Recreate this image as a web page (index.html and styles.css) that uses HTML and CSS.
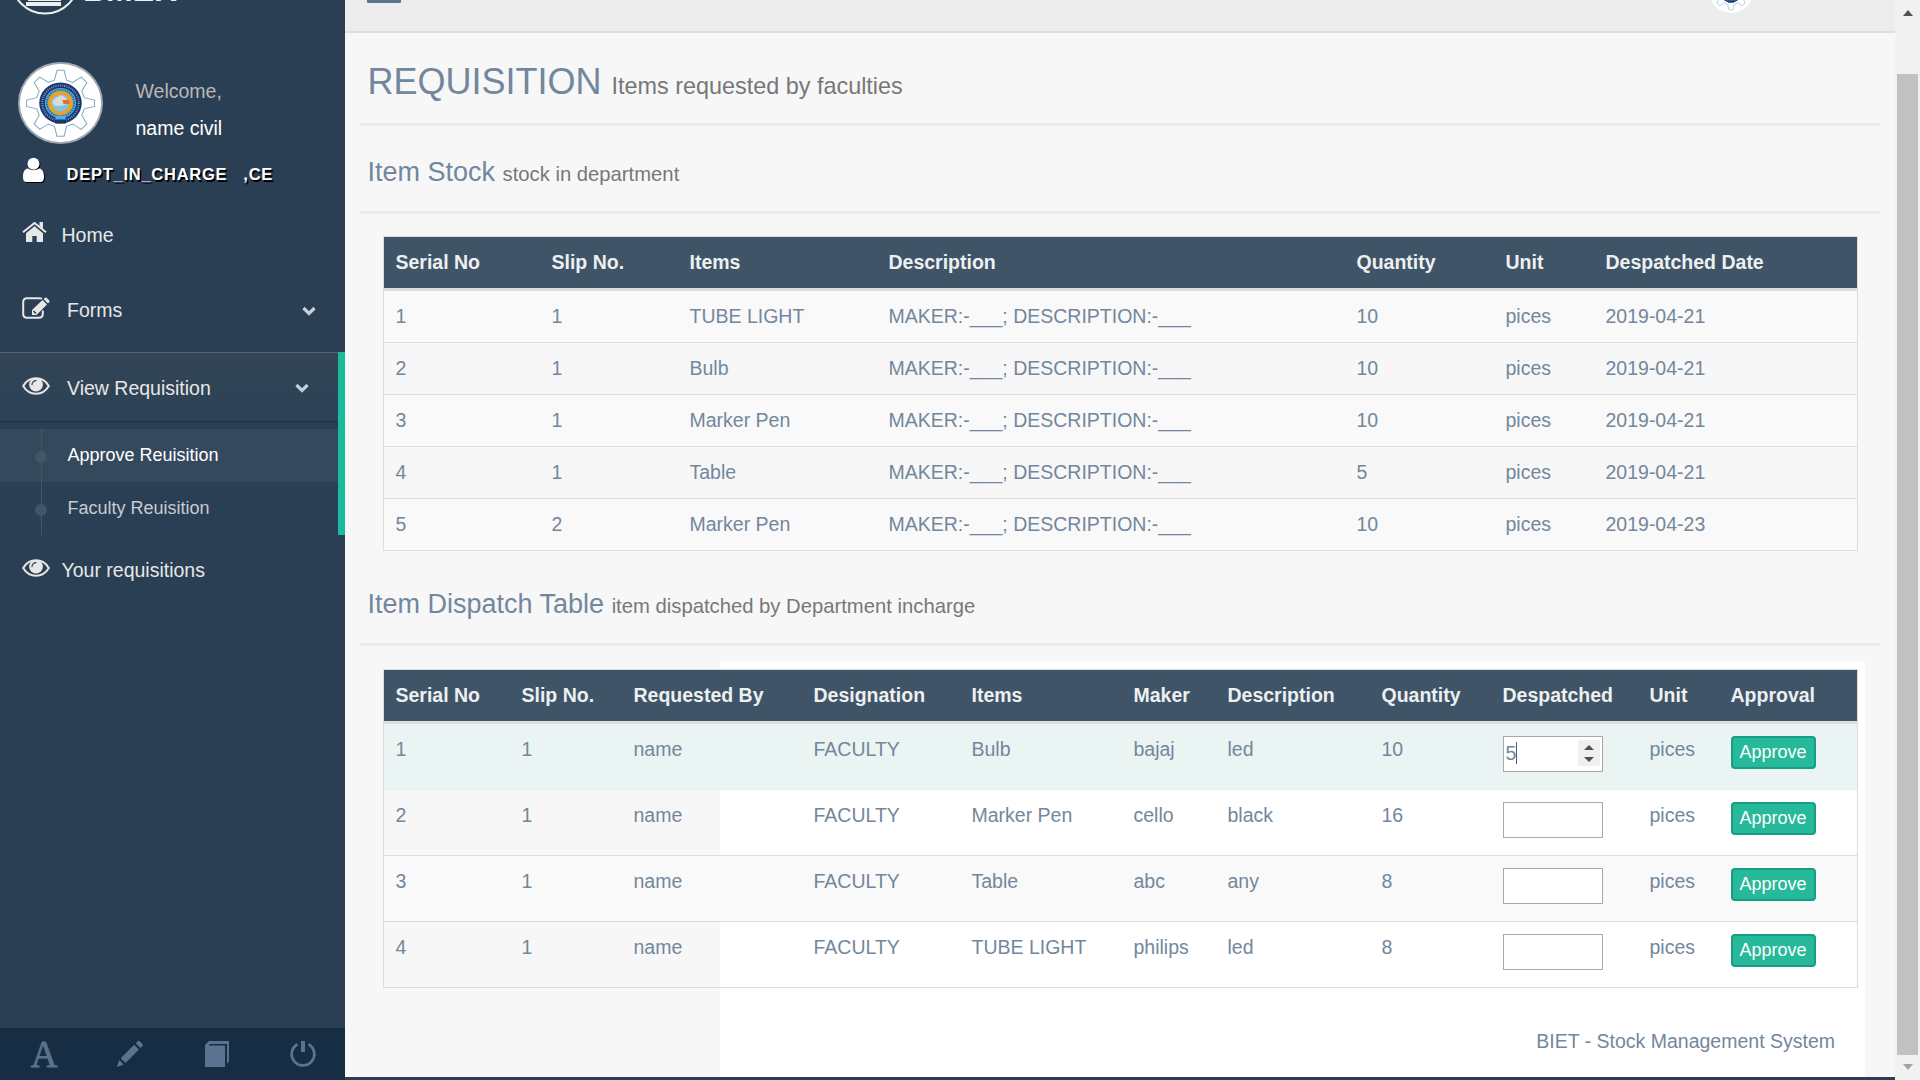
FILE: index.html
```html
<!DOCTYPE html>
<html lang="en">
<head>
<meta charset="utf-8">
<title>BIET - Stock Management System</title>
<link rel="stylesheet" href="styles.css">
</head>
<body>
<svg class="defs" width="0" height="0" aria-hidden="true">
  <symbol id="eye" viewBox="0 0 28 18">
    <path d="M1.2 9C4 4.200 8.500 1.300 14 1.300S24 4.200 26.800 9C24 13.800 19.500 16.700 14 16.700S4 13.800 1.200 9Z" fill="none" stroke="currentColor" stroke-width="2"/>
    <circle cx="14" cy="7.600" r="6.900" fill="currentColor"/>
    <path d="M10 7.800A4 4 0 0 1 14 3.600" fill="none" stroke="#2a3f54" stroke-width="1.100" stroke-linecap="round"/>
  </symbol>
  <symbol id="chevron" viewBox="0 0 14 10">
    <path d="M1.500 2 7 7.400 12.500 2" fill="none" stroke="currentColor" stroke-width="3.200"/>
  </symbol>
  <symbol id="emblem" viewBox="0 0 80 80">
    <circle cx="40" cy="40" r="40" fill="#fff"/>
    <path d="M36.500 6.500h7l2.500 10 6 2.500 8.500-5.500 5.500 5.500-5 9 2.500 6.500 10 2.500v6.500l-10 2.500-2.500 6.500 5 9-5.500 5.500-8.500-5.500-6 2.500-2.500 10h-7l-2.500-10-6-2.500-8.500 5.500-5.500-5.500 5-9-2.500-6.500-10-2.500v-6.500l10-2.500 2.500-6.500-5-9 5.500-5.500 8.500 5.500 6-2.500z" fill="#fff" stroke="#7fa9bf" stroke-width="1"/>
    <circle cx="40" cy="40" r="21" fill="#18366f"/>
    <circle cx="40" cy="40" r="18" fill="none" stroke="#8b9dbd" stroke-width="2" stroke-dasharray="1 1.200"/>
    <circle cx="40" cy="40" r="15.500" fill="#4fa3cf"/>
    <circle cx="40" cy="40" r="13.500" fill="none" stroke="#285a86" stroke-width="1.500" stroke-dasharray="1 1.500"/>
    <path d="M35 53h10v7.500h-10z" fill="#57aee0"/>
    <path d="M34.500 57h11v4h-11z" fill="#18366f"/>
    <circle cx="40" cy="40" r="10.500" fill="#7cc6e8" stroke="#f0a01c" stroke-width="3.400"/>
    <path d="M32 39c1-4 4-4 6-6 4-2 7 1 8 4v4c-4 2-10 3-13 1z" fill="#d6dad8"/>
    <path d="M42 37h6.500v4H43z" fill="#ee6a2c"/>
  </symbol>
</svg>
<div class="page">
  <aside class="sidebar">
    <div class="brand">
      <svg class="brand-mark" viewBox="0 0 70 70" width="70" height="70"><circle cx="35" cy="35" r="33.500" fill="none" stroke="#ecf0f1" stroke-width="2"/><path d="M18 52.500h33v3.500H18zM16 57h35v4H16z" fill="#ecf0f1"/></svg>
      <span class="brand-name">BMER</span>
    </div>
    <div class="profile">
      <div class="avatar"><svg viewBox="0 0 80 80" preserveAspectRatio="none"><use href="#emblem"/></svg></div>
      <div class="greeting"><span>Welcome,</span><strong>name civil</strong></div>
    </div>
    <div class="role">
      <svg width="26" height="28" viewBox="0 0 26 28"><path d="M6 11.500C2 12 1 16 1 20c0 3 1 5 4 5h13c3 0 4-2 4-5 0-4-1-8-5-8.500-3 2.200-8 2.200-11 0Z" fill="#fff"/><circle cx="11.500" cy="6.800" r="6" fill="#fff"/></svg>
      <span>DEPT_IN_CHARGE&nbsp;&nbsp;&nbsp;,CE</span>
    </div>
    <nav class="menu">
      <a class="item home"><svg width="25" height="20" viewBox="0 0 25 20"><path d="M12.500 4.200 21 11.200V20h-6.300v-6h-4.400v6H4v-8.800z" fill="currentColor"/><path d="M1 10.300 12.500 1 24 10.300" fill="none" stroke="currentColor" stroke-width="2"/><path d="M17.500 0H21v7l-3.500-3z" fill="currentColor"/></svg><span>Home</span></a>
      <a class="item forms"><svg width="28" height="22" viewBox="0 0 28 22"><path d="M20 1.700C19 1.200 18 1.200 17 1.200H5C2.500 1.200 1.200 2.500 1.200 5v12c0 2.500 1.300 3.800 3.800 3.800h12c2.500 0 3.800-1.300 3.800-3.800v-3.500" fill="none" stroke="currentColor" stroke-width="2"/><path d="M10 18v-5L20.500 3l4.500 4.500L14.500 18z M21.500 2 23 .8q.8-.7 1.600 0L27.300 3.500q.7.800 0 1.600L26 6.500z" fill="currentColor"/><path d="m11.500 14 2.500 2.500" stroke="#2a3f54" stroke-width="1.500"/></svg><span>Forms</span><svg class="chev" width="14" height="10"><use href="#chevron"/></svg></a>
      <div class="group">
        <a class="item view"><svg width="28" height="18"><use href="#eye"/></svg><span>View Requisition</span><svg class="chev" width="14" height="10"><use href="#chevron"/></svg></a>
        <ul class="submenu">
          <li class="current">Approve Reuisition</li>
          <li>Faculty Reuisition</li>
        </ul>
      </div>
      <a class="item yours"><svg width="28" height="18"><use href="#eye"/></svg><span>Your requisitions</span></a>
    </nav>
    <div class="tools">
      <span class="letter">A</span>
      <span><svg width="28" height="28" viewBox="0 0 28 28"><path d="M.8 27 3.200 20 7.800 24.600zM4.700 18.300 18.200 4.800l4.800 4.800L9.500 23.100zM19.700 3.300 21.800 1.200q1-1 2 0l2.700 2.700q1 1 0 2L24.500 8z" fill="currentColor"/></svg></span>
      <span><svg width="26" height="28" viewBox="0 0 26 28"><path d="M1 27V5L5 1h20v20l-2 3V4H6L4.500 5.500H21V27z" fill="currentColor"/></svg></span>
      <span><svg width="28" height="28" viewBox="0 0 28 28"><path d="M8.500 4.200a11.300 11.300 0 1 0 11 0" fill="none" stroke="currentColor" stroke-width="2.800"/><path d="M12 1h4v11h-4z" fill="currentColor"/></svg></span>
    </div>
  </aside>

  <main class="content">
    <header class="topbar">
      <span class="toggle"></span>
      <svg class="user" width="44" height="44"><use href="#emblem"/></svg>
    </header>
    <section class="body">
      <h1>REQUISITION <small>Items requested by faculties</small></h1>
      <h2>Item Stock <small>stock in department</small></h2>
      <table class="stock">
        <colgroup><col><col><col><col><col><col><col></colgroup>
        <thead><tr><th>Serial No</th><th>Slip No.</th><th>Items</th><th>Description</th><th>Quantity</th><th>Unit</th><th>Despatched Date</th></tr></thead>
        <tbody>
          <tr><td>1</td><td>1</td><td>TUBE LIGHT</td><td>MAKER:-___; DESCRIPTION:-___</td><td>10</td><td>pices</td><td>2019-04-21</td></tr>
          <tr><td>2</td><td>1</td><td>Bulb</td><td>MAKER:-___; DESCRIPTION:-___</td><td>10</td><td>pices</td><td>2019-04-21</td></tr>
          <tr><td>3</td><td>1</td><td>Marker Pen</td><td>MAKER:-___; DESCRIPTION:-___</td><td>10</td><td>pices</td><td>2019-04-21</td></tr>
          <tr><td>4</td><td>1</td><td>Table</td><td>MAKER:-___; DESCRIPTION:-___</td><td>5</td><td>pices</td><td>2019-04-21</td></tr>
          <tr><td>5</td><td>2</td><td>Marker Pen</td><td>MAKER:-___; DESCRIPTION:-___</td><td>10</td><td>pices</td><td>2019-04-23</td></tr>
        </tbody>
      </table>
      <h2 class="second">Item Dispatch Table <small>item dispatched by Department incharge</small></h2>
      <div class="panel">
        <table class="dispatch">
          <colgroup><col><col><col><col><col><col><col><col><col><col><col></colgroup>
          <thead><tr><th>Serial No</th><th>Slip No.</th><th>Requested By</th><th>Designation</th><th>Items</th><th>Maker</th><th>Description</th><th>Quantity</th><th>Despatched</th><th>Unit</th><th>Approval</th></tr></thead>
          <tbody>
            <tr class="hover"><td>1</td><td>1</td><td>name</td><td>FACULTY</td><td>Bulb</td><td>bajaj</td><td>led</td><td>10</td><td><div class="field"><span class="value">5</span><span class="spin"><i class="up"></i><i class="down"></i></span></div></td><td>pices</td><td><button>Approve</button></td></tr>
            <tr><td>2</td><td>1</td><td>name</td><td>FACULTY</td><td>Marker Pen</td><td>cello</td><td>black</td><td>16</td><td><div class="field"></div></td><td>pices</td><td><button>Approve</button></td></tr>
            <tr><td>3</td><td>1</td><td>name</td><td>FACULTY</td><td>Table</td><td>abc</td><td>any</td><td>8</td><td><div class="field"></div></td><td>pices</td><td><button>Approve</button></td></tr>
            <tr><td>4</td><td>1</td><td>name</td><td>FACULTY</td><td>TUBE LIGHT</td><td>philips</td><td>led</td><td>8</td><td><div class="field"></div></td><td>pices</td><td><button>Approve</button></td></tr>
          </tbody>
        </table>
        <footer>BIET - Stock Management System</footer>
      </div>
    </section>
  </main>

  <div class="scrollbar"><i class="up"></i><div class="thumb"></div><i class="down"></i></div>
</div>
</body>
</html>
```
FILE: styles.css
```css
* { box-sizing: border-box; }
body {
  margin: 0;
  height: 1080px;
  overflow: hidden;
  background: #2a3f54;
  color: #73879c;
  font: 19.5px/27px "Liberation Sans", Arial, sans-serif;
}
svg { display: block; flex: none; }
.defs { position: absolute; }
.page { display: grid; grid-template-columns: 345px 1550px 25px; height: 1080px; }

/* sidebar */
.sidebar { display: flex; flex-direction: column; height: 1080px; overflow: hidden; background: #2a3f54; color: #e7e7e7; }
.brand { display: flex; align-items: flex-end; height: 15px; flex: none; padding-left: 10px; }
.brand-name { margin-left: 3px; font-size: 32px; line-height: 40px; margin-bottom: 5px; color: #ecf0f1; font-weight: bold; }
.profile { display: flex; height: 82px; margin-top: 47px; flex: none; }
.avatar { width: 85px; height: 82px; margin-left: 18px; border: 2px solid #a0a8b4; border-radius: 50%; background: #fff; overflow: hidden; }
.avatar svg { width: 81px; height: 78px; }
.greeting { display: flex; flex-direction: column; margin-left: 32.500px; padding-top: 16px; gap: 10px; color: #bab8b8; }
.greeting strong { color: #fff; font-weight: normal; }
.role { display: flex; height: 39px; margin-top: 13px; padding-left: 21.500px; flex: none; color: #fff; font-size: 16.5px; font-weight: bold; letter-spacing: .75px; text-shadow: 1.5px 1.5px #000; }
.role svg { filter: drop-shadow(1.5px 1.5px 0 #000); }
.role span { margin: 4px 0 0 19px; }
.menu { flex: 1; }
.item { display: flex; align-items: flex-start; }
.item span { line-height: 27px; }
.home { height: 77px; padding: 26px 0 0 22px; }
.home span { margin: 0 0 0 14.500px; }
.forms { height: 79px; padding: 24px 29px 0 22px; }
.forms span { margin: 0 0 0 17px; }
.chev { margin-left: auto; color: #c4cfda; }
.forms .chev { margin-top: 9px; }
.group { border-right: 7px solid #1abb9c; height: 183px; }
.view { height: 69px; padding: 24px 29px 0 22px; border-top: 1px solid #52647a; background: linear-gradient(#334556, #2c4257), #2a3f54; box-shadow: 0 1px 0 #1f3042; }
.view span { margin: -2px 0 0 17px; }
.view .chev { margin-top: 6px; }
.submenu { list-style: none; margin: 8px 0 0; padding: 0; font-size: 18px; color: #c5ccd2; }
.submenu li { display: flex; align-items: center; position: relative; height: 53px; padding: 0 0 0 67.500px; }
.submenu li::before { content: ""; position: absolute; left: 35px; top: 22px; width: 12px; height: 12px; border-radius: 50%; background: #425668; }
.submenu li::after { content: ""; position: absolute; left: 41px; top: 0; width: 1px; height: 53px; background: #425668; }
.submenu .current { background: #35495d; color: #fff; }
.yours { padding: 24px 0 0 22px; }
.yours span { margin: -2px 0 0 11.500px; }
.tools { display: grid; grid-template-columns: repeat(4, 86.250px); height: 52px; flex: none; padding-left: 1px; background: #172d44; color: #5a738e; }
.tools span { display: flex; align-items: center; justify-content: center; }
.tools .letter { padding-top: 2px; font: 37px/40px "Liberation Serif", serif; -webkit-text-stroke: .8px #5a738e; }

/* content */
.content { height: 1077px; background: #f7f7f7; overflow: hidden; }
.topbar { display: flex; justify-content: space-between; align-items: flex-start; height: 33px; border-bottom: 2px solid #d9dee4; background: #ededed; padding: 0 142px 0 22px; }
.toggle { width: 34px; height: 3px; background: #5a738e; border-radius: 0 0 1px 1px; }
.user { margin-top: -31px; }
.body { padding: 0 15px; }
h1, h2 { margin: 0; padding-left: 7.500px; font-weight: normal; border-bottom: 3px solid #e6e9ed; white-space: nowrap; }
h1 { height: 93px; padding-top: 29px; font-size: 36px; line-height: 40px; }
h1 small { font-size: 23.400px; color: #777; }
h2 { height: 88px; padding-top: 31px; font-size: 27px; line-height: 30px; }
h2 small { font-size: 20.250px; color: #777; }
h2.second { margin-top: 0; height: 95px; padding-top: 38px; }

table { width: 1475px; table-layout: fixed; border-collapse: separate; border-spacing: 0; border: 1px solid #ddd; }
th, td { text-align: left; vertical-align: top; padding: 12px 0 11px 11.500px; white-space: nowrap; }
th { height: 54px; color: #ecf0f1; background: #405467; border-bottom: 3px solid #ddd; }
td { height: 52px; border-bottom: 1px solid #ddd; }
tbody tr:last-child td { height: 51px; border-bottom: 0; }
tbody tr:nth-child(odd) { background: #f9f9f9; }
.stock { margin: 22px 0 0 23px; }
.stock col:nth-child(1) { width: 156px; }
.stock col:nth-child(2) { width: 138px; }
.stock col:nth-child(3) { width: 199px; }
.stock col:nth-child(4) { width: 468px; }
.stock col:nth-child(5) { width: 149px; }
.stock col:nth-child(6) { width: 100px; }

.panel { margin-top: 15px; padding: 8px 8px 0 23px; margin-right: 15px; height: 416px; background: linear-gradient(90deg, #f7f7f7 360px, #fff 360px); }
.dispatch col:nth-child(1) { width: 126px; }
.dispatch col:nth-child(2) { width: 112px; }
.dispatch col:nth-child(3) { width: 180px; }
.dispatch col:nth-child(4) { width: 158px; }
.dispatch col:nth-child(5) { width: 162px; }
.dispatch col:nth-child(6) { width: 94px; }
.dispatch col:nth-child(7) { width: 154px; }
.dispatch col:nth-child(8) { width: 121px; }
.dispatch col:nth-child(9) { width: 147px; }
.dispatch col:nth-child(10) { width: 81px; }
.dispatch td { height: 66px; }
.dispatch tbody tr:last-child td { height: 65px; }
.dispatch .hover { background: #eaf4f2; }
.dispatch .hover td { border-bottom-color: #e3f0ec; }
.field { display: flex; justify-content: space-between; width: 100px; height: 36px; padding: 3px 2px 5px 2px; background: #fff; border: 1px solid #a9a9a9; }
.value { height: 22px; margin-top: 2px; line-height: 22px; border-right: 1px solid #4a5868; }
.spin { display: flex; flex-direction: column; align-items: center; justify-content: center; gap: 7px; width: 22px; height: 26px; background: #f0f0f0; }
.up, .down { display: block; width: 0; height: 0; border: 5px solid transparent; }
.up { border-top: 0; border-bottom-color: #505050; }
.down { border-bottom: 0; border-top-color: #505050; }
button { display: block; width: 85px; height: 33px; padding: 0 0 1px; border: 2px solid #169f85; border-radius: 4px; background: #26b99a; color: #fff; font: 18px/27px "Liberation Sans", Arial, sans-serif; }
footer { margin: 40px 22px 0 0; text-align: right; }

/* page scrollbar */
.scrollbar { display: flex; flex-direction: column; align-items: center; height: 1080px; padding: 10px 0 9px; background: #f1f1f1; }
.scrollbar .up { border-width: 0 5.500px 6px; }
.scrollbar .down { border-width: 6px 5.500px 0; border-top-color: #a3a3a3; }
.thumb { width: 21px; height: 981px; margin: 58px 0 9px; background: #c1c1c1; }
```
